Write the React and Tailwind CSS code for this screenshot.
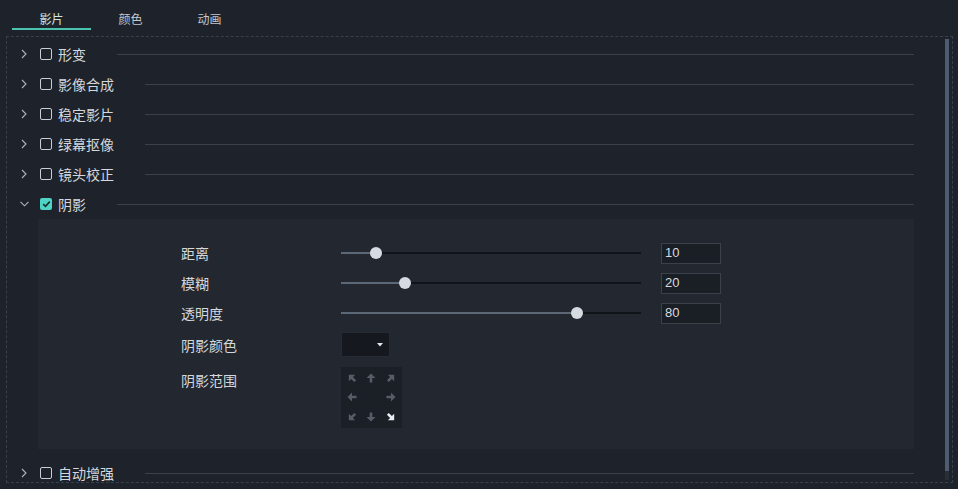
import React, { useState } from "react";

const FONT = { fontFamily: '"Noto Sans CJK SC", "Noto Sans", sans-serif' };

function Chevron({ open }) {
    return open ? (
        <svg width="9" height="6" viewBox="0 0 9 6" className="block">
            <path d="M0.5 0.8L4.5 4.8L8.5 0.8" fill="none" stroke="#aeb4bc" strokeWidth="1.1" />
        </svg>
    ) : (
        <svg width="9" height="10" viewBox="0 0 9 10" className="block">
            <path d="M2 1L6 5L2 9" fill="none" stroke="#aeb4bc" strokeWidth="1.1" />
        </svg>
    );
}

function Checkbox({ checked }) {
    if (checked) {
        return (
            <span className="w-[12px] h-[12px] rounded-[2px] bg-[#4fd3c4] flex items-center justify-center">
                <svg width="9" height="8" viewBox="0 0 9 8">
                    <path d="M1.2 4.2L3.5 6.3L7.8 1.6" fill="none" stroke="#16302e" strokeWidth="1.6" />
                </svg>
            </span>
        );
    }
    return <span className="block w-[12px] h-[12px] rounded-[2px] border border-[#c9ced4]" />;
}

function Row({ label, checked, open }) {
    return (
        <div className="flex items-center h-[30px]">
            <span className="ml-[13px] w-[9px] flex justify-center">
                <Chevron open={open} />
            </span>
            <span className="ml-[11px]">
                <Checkbox checked={checked} />
            </span>
            <span className="ml-[6px] text-[14px] leading-none text-[#d4d8dd]">{label}</span>
            <div className="flex-1 h-px bg-[#3b4049] ml-[31px]" />
        </div>
    );
}

function Slider({ value, label }) {
    const pos = 6 + (288 * value) / 100;
    return (
        <div className="flex items-center h-[20px]">
            <span className="w-[160px] text-[14px] leading-none text-[#d4d8dd]">{label}</span>
            <div className="relative w-[300px] h-[20px]">
                <div className="absolute left-0 right-0 top-[9px] h-[2px] bg-[#101318]" />
                <div className="absolute left-0 top-[9px] h-[2px] bg-[#5d6876]" style={{ width: pos }} />
                <div
                    className="absolute top-[4px] w-[12px] h-[12px] rounded-full bg-[#d6dbe1]"
                    style={{ left: pos - 6 }}
                />
            </div>
            <div className="ml-[20px] w-[60px] h-[21px] bg-[#1a1e25] border border-[#3a414b] flex items-center pl-[3px] text-[13px] text-[#d6dae0]" style={{ fontFamily: '"Liberation Sans", sans-serif' }}>
                {value}
            </div>
        </div>
    );
}

function Arrow({ angle, active }) {
    return (
        <svg width="10" height="10" viewBox="0 0 10 10" style={{ transform: `rotate(${angle}deg)` }}>
            <polygon points="5,0.5 9.5,5 6.3,5 6.3,9.5 3.7,9.5 3.7,5 0.5,5" fill={active ? "#e8ebef" : "#565d67"} />
        </svg>
    );
}

export default function App() {
    const [tab, setTab] = useState(0);
    const tabs = ["影片", "颜色", "动画"];
    const dirs = [-45, 0, 45, -90, null, 90, -135, 180, 135];

    return (
        <div className="w-[958px] h-[489px] bg-[#1e232b] overflow-hidden" style={FONT}>
            {/* tabs */}
            <div className="flex ml-[12px] h-[30px]">
                {tabs.map((t, i) => (
                    <button
                        key={t}
                        onClick={() => setTab(i)}
                        className={`w-[79px] h-[30px] pt-[10px] text-[12px] leading-[18px] border-b-2 ${
                            tab === i ? "border-[#4cc2b1] text-[#cfe7e4]" : "border-transparent text-[#c4c8ce]"
                        }`}
                    >
                        {t}
                    </button>
                ))}
            </div>

            {/* properties box */}
            <div className="mt-[6px] ml-[6px] w-[947px] h-[447px] border border-dashed border-[#37404c] flex overflow-hidden">
                <div className="flex-1 pt-[2px]">
                    <Row label="形变" />
                    <Row label="影像合成" />
                    <Row label="稳定影片" />
                    <Row label="绿幕抠像" />
                    <Row label="镜头校正" />
                    <Row label="阴影" checked open />

                    <div className="ml-[31px] bg-[#232830] pl-[143px] pt-[24px] pb-[21px]">
                        <div className="flex flex-col gap-[10px]">
                            <Slider label="距离" value={10} />
                            <Slider label="模糊" value={20} />
                            <Slider label="透明度" value={80} />
                        </div>
                        <div className="flex items-center mt-[9px] h-[25px]">
                            <span className="w-[160px] text-[14px] leading-none text-[#d4d8dd]">阴影颜色</span>
                            <div className="w-[49px] h-[25px] bg-[#15181e] border border-[#262b33] flex items-center justify-end pr-[6px]">
                                <svg width="6" height="4" viewBox="0 0 6 4">
                                    <polygon points="0,0 6,0 3,3.5" fill="#e2e5e9" />
                                </svg>
                            </div>
                        </div>
                        <div className="flex mt-[10px]">
                            <span className="w-[160px] pt-[6px] text-[14px] leading-none text-[#d4d8dd]">阴影范围</span>
                            <div className="w-[61px] h-[61px] bg-[#1b1f26] grid grid-cols-3 grid-rows-3 p-[1px]">
                                {dirs.map((a, i) => (
                                    <div key={i} className="flex items-center justify-center">
                                        {a !== null && <Arrow angle={a} active={i === 8} />}
                                    </div>
                                ))}
                            </div>
                        </div>
                    </div>

                    <div className="mt-[9px]">
                        <Row label="自动增强" />
                    </div>
                </div>

                {/* scrollbar */}
                <div className="ml-[31px] mr-[3px] w-[4px] mt-[2px] flex flex-col">
                    <div className="h-[432px] bg-[#4d5c70]" />
                    <div className="h-[9px] bg-[#2a2f37]" />
                </div>
            </div>
        </div>
    );
}
